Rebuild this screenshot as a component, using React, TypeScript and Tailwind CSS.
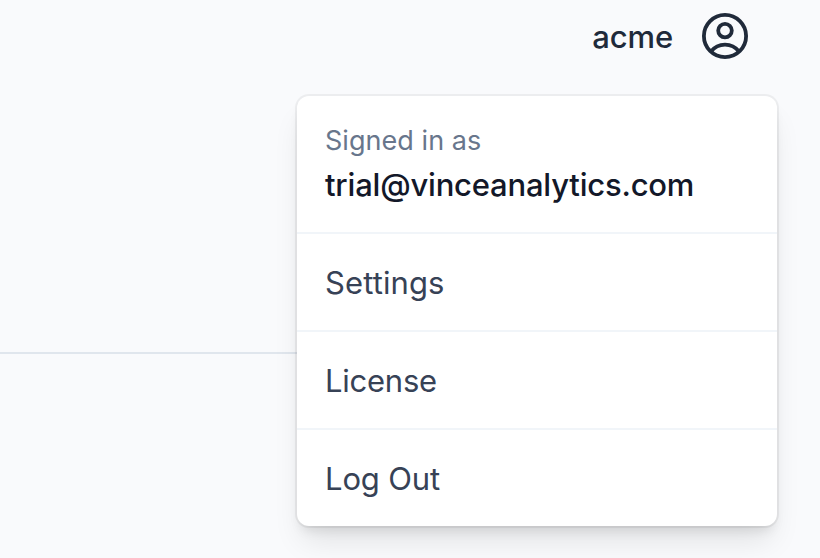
const items = [
  { label: "Settings", tracking: "tracking-[0.1px]" },
  { label: "License", tracking: "tracking-[-0.25px]" },
  { label: "Log Out", tracking: "tracking-[-0.15px]" },
];

function UserIcon() {
  return (
    <svg className="h-12 w-12" viewBox="0 0 48 48" fill="none" stroke="currentColor" strokeWidth="3.8">
      <circle cx="24" cy="24" r="21.1" />
      <circle cx="24" cy="18.6" r="6.8" />
      <path d="M10 39.500C13.500 35 18.500 32.600 24 32.600s10.500 2.400 14 6.900" />
    </svg>
  );
}

export default function App() {
  return (
    <div className="relative h-[558px] w-[820px] overflow-hidden bg-[#f9fafc] font-['Inter',sans-serif]">
      <header className="flex h-[354px] items-start justify-end pr-[71px] pt-3">
        <div className="flex h-12 items-center text-[#202a3a]">
          <span className="mr-7 pt-px text-[31px] font-medium leading-[48px] tracking-[-0.1px]">acme</span>
          <UserIcon />
        </div>
      </header>
      <hr className="-mt-[2px] w-[400px] border-t-2 border-[#e0e6ed]" />
      <div className="absolute left-[297px] top-[96px] w-[480px] rounded-xl bg-white shadow-[0_0_0_2px_rgba(0,0,0,0.05),0_20px_30px_-6px_rgba(0,0,0,0.1),0_8px_12px_-4px_rgba(0,0,0,0.1)]">
        <div className="h-[136px] px-7 pt-[25px]">
          <p className="text-[27px] leading-10 tracking-[0.05px] text-[#68768c]">Signed in as</p>
          <p className="text-[31px] font-medium leading-[48px] tracking-[-0.2px] text-[#131829]">trial@vinceanalytics.com</p>
        </div>
        {items.map(({ label, tracking }) => (
          <div key={label} className={`h-[98px] border-t-2 border-[#f1f5f9] px-7 pt-[25px] text-[31px] leading-[48px] text-[#374256] ${tracking}`}>{label}</div>
        ))}
      </div>
    </div>
  );
}
